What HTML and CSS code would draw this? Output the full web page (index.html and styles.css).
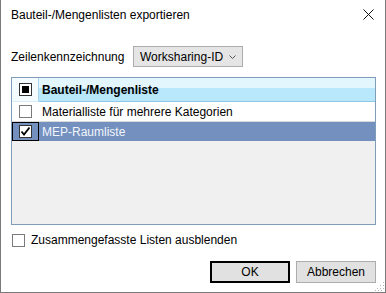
FILE: index.html
```html
<!DOCTYPE html>
<html>
  <head>
    <meta charset="utf-8" />
    <title>Bauteil-/Mengenlisten exportieren</title>
    <link rel="stylesheet" href="styles.css">
  </head>
  <body>
    <div class="dialog">
      <div class="titlebar">
        <span class="title">Bauteil-/Mengenlisten exportieren</span>
        <svg class="close" width="11" height="11" viewBox="0 0 11 11">
          <path d="M0.5 0.5 L10.5 10.5 M10.5 0.5 L0.5 10.5" stroke="#111" stroke-width="1" fill="none" />
        </svg>
      </div>
      <div class="content">
        <div class="field">
          <span class="label">Zeilenkennzeichnung</span>
          <div class="select">
            <span>Worksharing-ID</span>
            <svg width="7" height="4" viewBox="0 0 7 4">
              <path d="M0.5 0.5 L3.5 3.5 L6.5 0.5" stroke="#555" stroke-width="1" fill="none" />
            </svg>
          </div>
        </div>
        <div class="list">
          <div class="list-head">
            <div class="cell-check head-check">
              <span class="box box-dark"><span class="fill"></span></span>
            </div>
            <div class="cell-text head-text">Bauteil-/Mengenliste</div>
          </div>
          <div class="list-row">
            <div class="cell-check">
              <span class="box"></span>
            </div>
            <div class="cell-text">Materialliste für mehrere Kategorien</div>
          </div>
          <div class="list-row selected">
            <div class="cell-check focused">
              <span class="box box-dark">
                <svg width="11" height="11" viewBox="0 0 11 11">
                  <path d="M1.5 5.5 L4 8.5 L9.5 1.5" stroke="#000" stroke-width="1.8" fill="none" />
                </svg>
              </span>
            </div>
            <div class="cell-text">MEP-Raumliste</div>
          </div>
        </div>
        <label class="option">
          <span class="box"></span>
          <span>Zusammengefasste Listen ausblenden</span>
        </label>
        <div class="buttons">
          <button class="btn default">OK</button>
          <button class="btn">Abbrechen</button>
        </div>
      </div>
      <svg class="grip" width="10" height="10" viewBox="0 0 10 10">
        <rect x="8" y="0" width="1" height="1" fill="#b5b5b5" />
        <rect x="5" y="3" width="1" height="1" fill="#b5b5b5" />
        <rect x="8" y="3" width="1" height="1" fill="#b5b5b5" />
        <rect x="2" y="6" width="1" height="1" fill="#b5b5b5" />
        <rect x="5" y="6" width="1" height="1" fill="#b5b5b5" />
        <rect x="8" y="6" width="1" height="1" fill="#b5b5b5" />
        <rect x="0" y="8" width="1" height="1" fill="#b5b5b5" />
        <rect x="3" y="8" width="1" height="1" fill="#b5b5b5" />
        <rect x="6" y="8" width="1" height="1" fill="#b5b5b5" />
      </svg>
    </div>
  </body>
</html>
```

FILE: styles.css
```css
* {
  margin: 0;
  padding: 0;
  box-sizing: border-box;
}
html,
body {
  width: 100%;
  height: 100%;
  background: #fff;
}
body {
  font-family: "Liberation Sans", Arial, sans-serif;
  font-size: 12px;
  color: #000;
}
.dialog {
  position: relative;
  width: 386px;
  height: 293px;
  border: 1px solid #7a7a7a;
  border-top: none;
  display: flex;
  flex-direction: column;
}
.titlebar {
  height: 30px;
  padding: 0 11px 0 10px;
  display: flex;
  align-items: center;
  justify-content: space-between;
}
.close {
  margin-top: -1px;
}
.content {
  padding: 0 9px 0 10px;
  display: flex;
  flex-direction: column;
}
.field {
  margin-top: 16px;
  display: flex;
  align-items: center;
}
.label {
  width: 122px;
}
.select {
  width: 110px;
  height: 21px;
  border: 1px solid #adadad;
  background: #e5e5e5;
  display: flex;
  align-items: center;
  justify-content: space-between;
  padding: 0 6px 0 6px;
}
.list {
  margin-top: 10px;
  height: 148px;
  border: 1px solid #7f9db9;
  background: #f0f0f0;
}
.list-head {
  display: flex;
  height: 24px;
}
.head-check {
  background: #f4fbfe;
  border-right: 1px solid #a9d6ee;
  border-bottom: 1px solid #d8eef9;
}
.head-text {
  flex: 1;
  font-weight: bold;
  background: linear-gradient(#e3f6fe 0, #e3f6fe 45%, #b9e7fc 45%, #b9e7fc 100%);
  border-bottom: 1px solid #8ec8e6;
}
.list-row {
  display: flex;
  height: 20px;
  background: #fff;
  border-bottom: 1px solid #d9d9d9;
}
.list-row.selected {
  height: 19px;
  background: #7390bf;
  color: #f2f5fb;
  border-bottom: none;
}
.cell-check {
  width: 27px;
  display: flex;
  align-items: center;
  justify-content: center;
}
.cell-check.focused {
  border: 1px solid #000;
}
.cell-text {
  flex: 1;
  display: flex;
  align-items: center;
  padding-left: 3px;
}
.box {
  width: 13px;
  height: 13px;
  border: 1px solid #7a7a7a;
  background: #fff;
  display: flex;
  align-items: center;
  justify-content: center;
}
.box-dark {
  border-color: #333;
}
.fill {
  width: 7px;
  height: 7px;
  background: #000;
}
.option {
  margin-top: 8px;
  display: flex;
  align-items: center;
  gap: 6px;
  padding-left: 1px;
}
.buttons {
  margin-top: 14px;
  display: flex;
  justify-content: flex-end;
  gap: 6px;
}
.btn {
  width: 80px;
  height: 22px;
  border: 1px solid #adadad;
  background: #e1e1e1;
  font-family: inherit;
  font-size: 12px;
  color: #000;
}
.btn.default {
  border: 2px solid #000;
}
.grip {
  position: absolute;
  right: 0;
  bottom: 0;
}
```
